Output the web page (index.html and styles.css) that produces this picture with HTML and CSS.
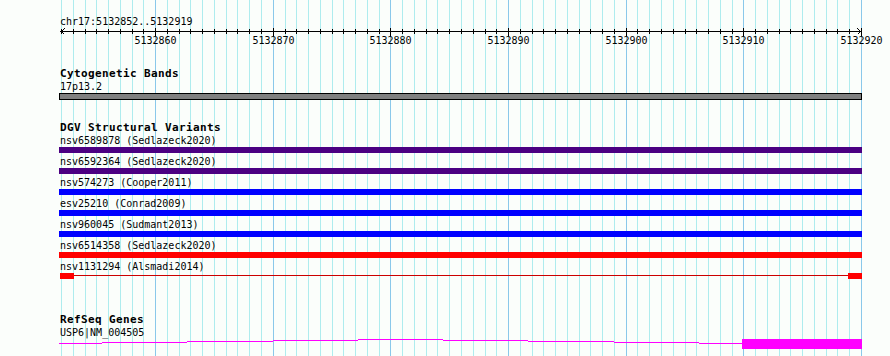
FILE: index.html
```html
<!DOCTYPE html>
<html>
<head>
  <title>chr17:5132852..5132919</title>
  <link rel="stylesheet" href="styles.css">
</head>
<body>
  <div class="panel">
    <svg id="grid" class="grid" width="890" height="356"></svg>

    <!-- ruler -->
    <div class="track ruler">
      <div class="label">chr17:5132852..5132919</div>
      <svg id="scale" class="scale" width="803" height="21"></svg>
    </div>

    <div class="track cyto">
      <div class="track-title">Cytogenetic Bands</div>
      <div class="label">17p13.2</div>
      <div class="band"></div>
    </div>

    <div class="track dgv">
      <div class="track-title">DGV Structural Variants</div>
      <div class="feature">
        <div class="label">nsv6589878 (Sedlazeck2020)</div>
        <div class="bar indigo"></div>
      </div>
      <div class="feature">
        <div class="label">nsv6592364 (Sedlazeck2020)</div>
        <div class="bar indigo"></div>
      </div>
      <div class="feature">
        <div class="label">nsv574273 (Cooper2011)</div>
        <div class="bar blue"></div>
      </div>
      <div class="feature">
        <div class="label">esv25210 (Conrad2009)</div>
        <div class="bar blue"></div>
      </div>
      <div class="feature">
        <div class="label">nsv960045 (Sudmant2013)</div>
        <div class="bar blue"></div>
      </div>
      <div class="feature">
        <div class="label">nsv6514358 (Sedlazeck2020)</div>
        <div class="bar red"></div>
      </div>
      <div class="feature">
        <div class="label">nsv1131294 (Alsmadi2014)</div>
        <div class="split">
          <span class="block"></span>
          <span class="link"></span>
          <span class="block"></span>
        </div>
      </div>
    </div>

    <div class="track refseq">
      <div class="track-title">RefSeq Genes</div>
      <div class="label">USP6|NM_004505</div>
      <svg class="gene" width="803" height="10">
        <!-- intron, drawn as a flat hat -->
        <rect x="0" y="4" width="43" height="1"/>
        <rect x="43" y="3" width="85" height="1"/>
        <rect x="128" y="2" width="86" height="1"/>
        <rect x="214" y="1" width="85" height="1"/>
        <rect x="299" y="0" width="85" height="1"/>
        <rect x="384" y="1" width="85" height="1"/>
        <rect x="469" y="2" width="86" height="1"/>
        <rect x="555" y="3" width="85" height="1"/>
        <rect x="640" y="4" width="43" height="1"/>
        <!-- exon -->
        <rect x="683" y="0" width="120" height="10"/>
      </svg>
    </div>
  </div>

  <script>
    const NS = 'http://www.w3.org/2000/svg';
    const start = 5132852;
    const bases = 68;
    const left = 59;

    const grid = document.getElementById('grid');
    const scale = document.getElementById('scale');

    // x position of a base, in page pixels
    const baseX = (i) => Math.round(61 + i * 800 / bases);

    const rect = (parent, x, y, w, h, cls) => {
      const r = document.createElementNS(NS, 'rect');
      r.setAttribute('x', x);
      r.setAttribute('y', y);
      r.setAttribute('width', w);
      r.setAttribute('height', h);
      if (cls) r.setAttribute('class', cls);
      parent.appendChild(r);
    };

    // ruler line
    rect(scale, 1, 5, 802, 1, 'tick');

    for (let i = 0; i <= bases; i++) {
      const x = baseX(i);
      const major = (start + i) % 10 === 0;

      rect(grid, x, 0, 1, 356, major ? 'major' : 'minor');

      if (major) {
        rect(scale, x - left, 2, 1, 8, 'tick');
        const label = document.createElementNS(NS, 'text');
        label.setAttribute('x', x - left + 0.5);
        label.setAttribute('y', 18);
        label.textContent = start + i;
        scale.appendChild(label);
      } else {
        rect(scale, x - left, 3, 1, 5, 'tick');
      }
    }

    // arrow heads
    const arrow = (points) => {
      const p = document.createElementNS(NS, 'polyline');
      p.setAttribute('points', points);
      p.setAttribute('class', 'arrow');
      scale.appendChild(p);
    };
    arrow('5.5,2.5 2.5,5.5 5.5,8.5');
    arrow('798.5,2.5 801.5,5.5 798.5,8.5');
  </script>
</body>
</html>
```

FILE: styles.css
```css
/* track panel */

body {
  margin: 0;
  background-color: #fbfefb;
  font-family: "DejaVu Sans Mono", "Liberation Mono", monospace;
  color: #000;
}

.panel {
  position: relative;
  width: 890px;
  height: 356px;
  overflow: hidden;
  background-color: #fbfefb;
}

.grid {
  position: absolute;
  top: 0;
  left: 0;
}

.grid .minor {
  fill: #aeecee;
}

.grid .major {
  fill: #8ac8ea;
}

.track {
  position: relative;
  margin-left: 59px;
  width: 803px;
}

.label {
  padding-left: 1px;
  font-size: 10px;
  line-height: 13px;
  white-space: pre;
}

.track-title {
  padding-left: 1px;
  font-size: 11px;
  font-weight: bold;
  letter-spacing: 0.38px;
  line-height: 13px;
  white-space: pre;
}

/* ruler */

.ruler {
  padding-top: 15px;
}

.scale {
  display: block;
  margin-top: -2px;
  overflow: visible;
}

.scale .tick {
  fill: #000;
}

.scale text {
  font-size: 10px;
  text-anchor: middle;
  fill: #000;
}

.scale .arrow {
  fill: none;
  stroke: #000;
  stroke-width: 1;
  shape-rendering: crispEdges;
}

/* cytogenetic bands */

.cyto {
  margin-top: 20px;
}

.band {
  height: 7px;
  box-sizing: border-box;
  border: 1px solid #000;
  background-color: #808080;
}

/* structural variants */

.dgv {
  margin-top: 21px;
}

.feature {
  margin-bottom: 2px;
}

.bar {
  height: 6px;
}

.indigo {
  background-color: #4b0082;
}

.blue {
  background-color: #0000ff;
}

.red {
  background-color: #ff0000;
}

.split {
  display: flex;
  height: 6px;
  padding-left: 1px;
}

.split .block {
  width: 14px;
  background-color: #ff0000;
}

.split .link {
  flex: 1;
  height: 1px;
  margin-top: 2px;
  background-color: #cc0000;
}

/* genes */

.refseq {
  margin-top: 34px;
}

.gene {
  display: block;
  fill: #ff00ff;
}
```
